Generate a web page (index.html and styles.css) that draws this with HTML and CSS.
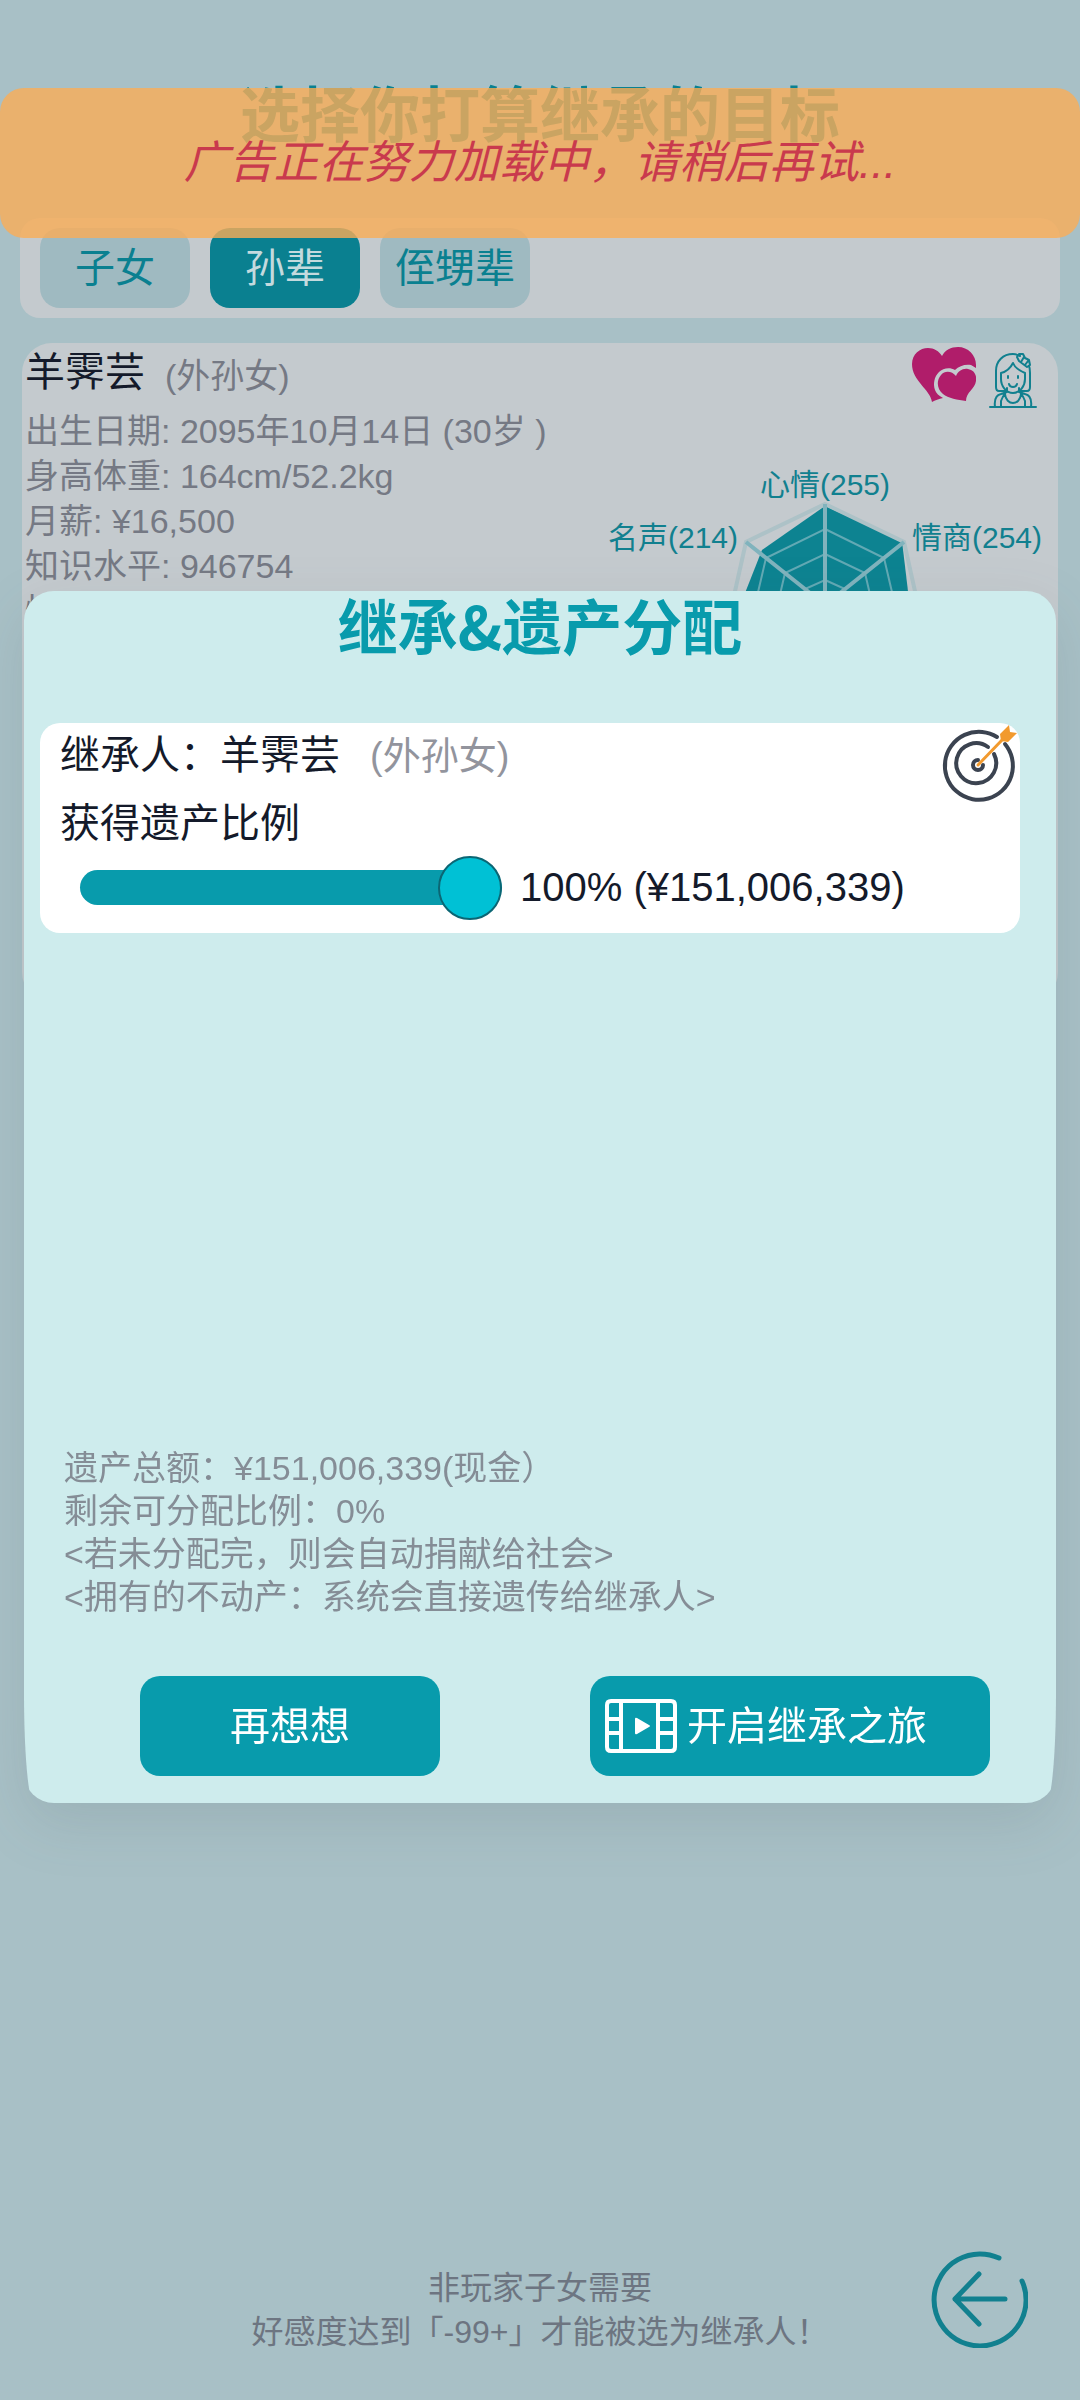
FILE: index.html
```html
<!DOCTYPE html>
<html lang="zh-CN">
<head>
<meta charset="utf-8">
<meta name="viewport" content="width=device-width, initial-scale=1">
<title>选择你打算继承的目标</title>
<link rel="stylesheet" href="styles.css">
</head>
<body>
<main class="page">
  <h1 class="page-title">选择你打算继承的目标</h1>
  <nav class="tabs">
    <button class="tab" type="button">子女</button>
    <button class="tab tab-active" type="button">孙辈</button>
    <button class="tab" type="button">侄甥辈</button>
  </nav>

  <section class="person">
    <header class="person-head">
      <h2 class="person-name">羊霁芸</h2>
      <span class="person-relation">(外孙女)</span>
      <svg class="icon-hearts" viewBox="0 0 64 56" aria-hidden="true">
        <path class="heart" d="M20 55C18 42 0 34 0 17C0 7 8 1 16 1C22 1 27 4 30 9C33 3 39 0 46 0C56 0 64 8 64 18L64 21L59 18C53 17 47 19 43 23C38 20 31 21 27 25C22 30 21 37 23 43C24 46 27 49 31 51C27 52 23 53 20 55Z"/>
        <path class="heart" d="M54 54C46 53 36 51 31 47C25 42 24 34 29 28C33 23 40 24 44 29C46 24 51 21 56 22C62 23 65 28 64 34C63 42 54 45 54 54Z"/>
      </svg>
      <svg class="icon-girl" viewBox="0 0 48 60" aria-hidden="true">
        <path d="M1 54H47M6 54C5 46 7 42 12 41L18 39V35M30 35V39L36 41C41 42 43 46 42 54M12 54V48M36 54V48M16 41C17 53 31 53 32 41M16 41C14 43 13 45 12 48M32 41C34 43 35 45 36 48"/>
        <path d="M18 38H10C8 38 7 36 7 34V18C7 8 14 1 24 1C27 1 29 2 31 3M40 13C41 15 41 17 41 20V34C41 36 40 38 38 38H30"/>
        <path d="M12 20C16 19 21 16 24 10C26 15 31 18 36 20V26C36 33 31 40 24 40C17 40 12 33 12 26ZM20 31C21 35 27 35 28 31M19 23V25M29 23V25"/>
        <path d="M30 1L34 1L36 5L40 7L41 12L38 14L34 11L30 8L28 4ZM35 4L32 9M39 8L36 12"/>
      </svg>
    </header>
    <div class="person-body">
      <ul class="facts">
        <li>出生日期: 2095年10月14日 (30岁 )</li>
        <li>身高体重: 164cm/52.2kg</li>
        <li>月薪: ¥16,500</li>
        <li>知识水平: 946754</li>
        <li>性格:</li>
      </ul>
      <svg class="radar" viewBox="600 460 450 520" role="img" aria-label="能力雷达图">
        <polygon class="radar-data" points="825,506 902,541 912,625 864,686 786,686 732,626 762,550"/>
        <g class="radar-outer">
          <polygon points="825,504 904,542 923,627 869,696 781,696 727,627 746,542"/>
        </g>
        <g class="radar-ring">
          <polygon points="825,529 884,558 899,622 858,673 792,673 751,622 766,558"/>
          <polygon points="825,554 865,573 875,616 847,651 803,651 775,616 785,573"/>
          <polygon points="825,580 845,589 850,611 836,628 814,628 800,611 805,589"/>
        </g>
        <path class="radar-spoke" d="M825 605V504M825 605L904 542M825 605L923 627M825 605L869 696M825 605L781 696M825 605L727 627M825 605L746 542"/>
        <text class="radar-label" x="760" y="495">心情(255)</text>
        <text class="radar-label" x="608" y="548">名声(214)</text>
        <text class="radar-label" x="912" y="548">情商(254)</text>
      </svg>
    </div>
  </section>

  <footer class="page-foot">
    <p class="hint">非玩家子女需要<br>好感度达到「-99+」才能被选为继承人！</p>
    <button class="back" type="button" aria-label="返回">
      <svg viewBox="0 0 98 98" aria-hidden="true">
        <path d="M69 8A46 46 0 1 0 92 31M25 49H75M49 24L25 49L49 74"/>
      </svg>
    </button>
  </footer>
</main>

<div class="overlay">
  <div class="dialog-shadow">
    <div class="dialog-clip">
      <section class="dialog" role="dialog" aria-labelledby="dialog-title">
        <h2 class="dialog-title" id="dialog-title">继承&amp;遗产分配</h2>
        <div class="heir">
          <svg class="icon-target" viewBox="0 0 76 76" aria-hidden="true">
            <path class="target-ring" d="M57 14A34 34 0 1 0 65 21M48 24A20 20 0 1 0 54 31M38 37A5 5 0 1 0 43 42"/>
            <path class="target-arrow" d="M38 42L63 16"/>
            <path class="target-feather" d="M60 11L69 2L70 9L77 10L68 19L61 18Z"/>
          </svg>
          <p class="heir-line">继承人：羊霁芸<span class="heir-relation">(外孙女)</span></p>
          <label class="heir-line" for="share">获得遗产比例</label>
          <div class="share-row">
            <input class="share" id="share" type="range" min="0" max="100" value="100">
            <output class="share-value" for="share">100% (¥151,006,339)</output>
          </div>
        </div>
        <p class="summary">遗产总额：¥151,006,339(现金）<br>剩余可分配比例：0%<br>&lt;若未分配完，则会自动捐献给社会&gt;<br>&lt;拥有的不动产：系统会直接遗传给继承人&gt;</p>
        <div class="actions">
          <button class="btn btn-cancel" type="button">再想想</button>
          <button class="btn btn-start" type="button">
            <svg class="icon-film" viewBox="0 0 72 54" aria-hidden="true">
              <path class="film-frame" d="M6 2H66Q70 2 70 6V48Q70 52 66 52H6Q2 52 2 48V6Q2 2 6 2ZM16 2V52M53 2V52M2 20H16M2 34H16M53 20H70M53 34H70"/>
              <path class="film-play" d="M30 20Q30 18 32 19L44 26Q46 27 44 28L32 35Q30 36 30 34Z"/>
            </svg>
            <span class="btn-text">开启继承之旅</span>
          </button>
        </div>
      </section>
    </div>
  </div>
</div>

<div class="toast" role="status">广告正在努力加载中，请稍后再试...</div>
</body>
</html>
```
FILE: styles.css
```css
:root {
  --teal: #089bac;
  --teal-dim: #0a8090;
  --ink: #141a2a;
  --line: 45px;
}

* {
  box-sizing: border-box;
}

body {
  margin: 0;
  background: #a8c0c6;
  color: var(--ink);
  font-family: "Liberation Sans", "Noto Sans CJK SC", sans-serif;
  font-size: 40px;
}

h1,
h2,
p,
ul {
  margin: 0;
  padding: 0;
}

button {
  border: 0;
  padding: 0;
  font: inherit;
}

.page {
  display: flex;
  flex-direction: column;
  min-height: 100vh;
  padding: 76px 20px 46px;
}

.page-title {
  color: var(--teal-dim);
  font-family: "Noto Sans CJK SC", sans-serif;
  font-size: 60px;
  font-weight: 700;
  line-height: 70px;
  text-align: center;
}

.tabs {
  display: flex;
  gap: 20px;
  margin-top: 72px;
  padding: 10px 20px;
  border-radius: 20px;
  background: #c4cace;
}

.tab {
  width: 150px;
  height: 80px;
  padding-bottom: 6px;
  border-radius: 20px;
  background: #9fbac1;
  color: var(--teal-dim);
}

.tab-active {
  background: var(--teal-dim);
  color: #c4dade;
}

.person {
  margin: 25px 2px 0;
  padding: 0 8px 22px 3px;
  border-radius: 30px;
  background: #c4cace;
}

.person-head {
  display: flex;
  align-items: center;
  height: 60px;
  padding-right: 13px;
}

.person-name {
  font-size: 40px;
  font-weight: 400;
  line-height: 56px;
  padding-bottom: 3px;
}

.person-relation {
  margin-left: 20px;
  color: #757984;
  font-size: 34px;
}

.icon-hearts {
  width: 64px;
  height: 56px;
  margin: 4px 0 0 auto;
}

.heart {
  fill: #b01d6a;
}

.icon-girl {
  align-self: flex-end;
  width: 48px;
  height: 60px;
  margin: 0 0 -10px 13px;
  fill: none;
  stroke: #11808f;
  stroke-width: 2;
  stroke-linecap: round;
  stroke-linejoin: round;
  overflow: visible;
}

.person-body {
  display: flex;
  justify-content: space-between;
  padding-top: 5px;
}

.facts {
  padding-top: 1px;
  list-style: none;
  color: #757984;
  font-size: 34px;
  line-height: var(--line);
}

.radar {
  width: 450px;
  height: 520px;
  margin-top: 52px;
}

.radar-data {
  fill: #0d8391;
}

.radar-outer {
  fill: none;
  stroke: #adc2c7;
  stroke-width: 4;
}

.radar-ring {
  fill: none;
  stroke: #62a9b4;
  stroke-width: 2;
}

.radar-spoke {
  fill: none;
  stroke: #80b3bd;
  stroke-width: 4;
}

.radar-label {
  fill: #11808f;
  font-size: 30px;
}

.page-foot {
  position: relative;
  margin-top: auto;
}

.hint {
  color: #6d7581;
  font-size: 32px;
  line-height: 44px;
  text-align: center;
}

.back {
  position: absolute;
  right: 32px;
  bottom: 6px;
  width: 98px;
  height: 98px;
  background: none;
}

.back svg {
  display: block;
  fill: none;
  stroke: #11808f;
  stroke-width: 5;
  stroke-linecap: round;
  stroke-linejoin: round;
}

.overlay {
  position: absolute;
  inset: 0;
  display: grid;
  align-items: center;
  padding: 0 24px 6px;
}

.dialog-shadow {
  filter: drop-shadow(0 20px 28px rgba(60, 75, 85, 0.12));
}

.dialog-clip {
  overflow: hidden;
  border-radius: 30px;
}

/* The lower corners taper before they round off. */
.dialog {
  display: flex;
  flex-direction: column;
  min-height: 50.5vh;
  padding: 0 36px 27px 16px;
  border-radius: 0 0 10px 10px / 0 0 110px 110px;
  background: #ceeced;
}

.dialog-title {
  margin-right: -20px;
  color: var(--teal);
  font-family: "Noto Sans CJK SC", sans-serif;
  font-size: 60px;
  font-weight: 700;
  line-height: 66px;
  text-align: center;
}

.heir {
  position: relative;
  display: flex;
  flex-direction: column;
  margin-top: 66px;
  padding: 0 20px 14px;
  border-radius: 20px;
  background: #fff;
}

.heir-line {
  line-height: 64px;
}

.heir-line + .heir-line {
  margin-top: 3px;
}

.heir-relation {
  margin-left: 30px;
  color: #92949d;
  font-size: 38px;
}

.icon-target {
  position: absolute;
  top: 0;
  right: 4px;
  width: 76px;
  height: 76px;
  overflow: visible;
}

.target-ring {
  fill: none;
  stroke: #3b4350;
  stroke-width: 4;
  stroke-linecap: round;
}

.target-arrow {
  stroke: #f29a2e;
  stroke-width: 3;
  stroke-linecap: round;
}

.target-feather {
  fill: #f29a2e;
}

.share-row {
  display: flex;
  align-items: center;
  gap: 18px;
  padding-left: 20px;
}

.share {
  appearance: none;
  width: 422px;
  height: 64px;
  margin: 0;
  background: none;
}

.share::-webkit-slider-runnable-track {
  height: 35px;
  border-radius: 18px;
  background: var(--teal);
}

.share::-webkit-slider-thumb {
  appearance: none;
  width: 64px;
  height: 64px;
  margin-top: -14px;
  border: 2px solid #0b6674;
  border-radius: 50%;
  background: #00c1d5;
}

.summary {
  margin-top: auto;
  padding-left: 24px;
  color: #858d96;
  font-size: 34px;
  line-height: 43px;
}

.actions {
  display: flex;
  justify-content: space-between;
  margin-top: 57px;
  padding: 0 30px 0 100px;
}

.btn {
  height: 100px;
  border-radius: 20px;
  background: var(--teal);
  color: #fff;
}

.btn-cancel {
  width: 300px;
  padding-bottom: 6px;
}

.btn-start {
  display: flex;
  align-items: center;
  gap: 10px;
  width: 400px;
  padding-left: 15px;
}

.btn-text {
  padding-bottom: 6px;
}

.icon-film {
  width: 72px;
  height: 54px;
}

.film-frame {
  fill: none;
  stroke: #fff;
  stroke-width: 4;
}

.film-play {
  fill: #fff;
}

.toast {
  position: absolute;
  top: 88px;
  left: 0;
  right: 0;
  border-radius: 24px;
  background: rgba(250, 172, 86, 0.8);
  color: #c93a4d;
  font-size: 45px;
  font-style: italic;
  line-height: 150px;
  text-align: center;
}
```
